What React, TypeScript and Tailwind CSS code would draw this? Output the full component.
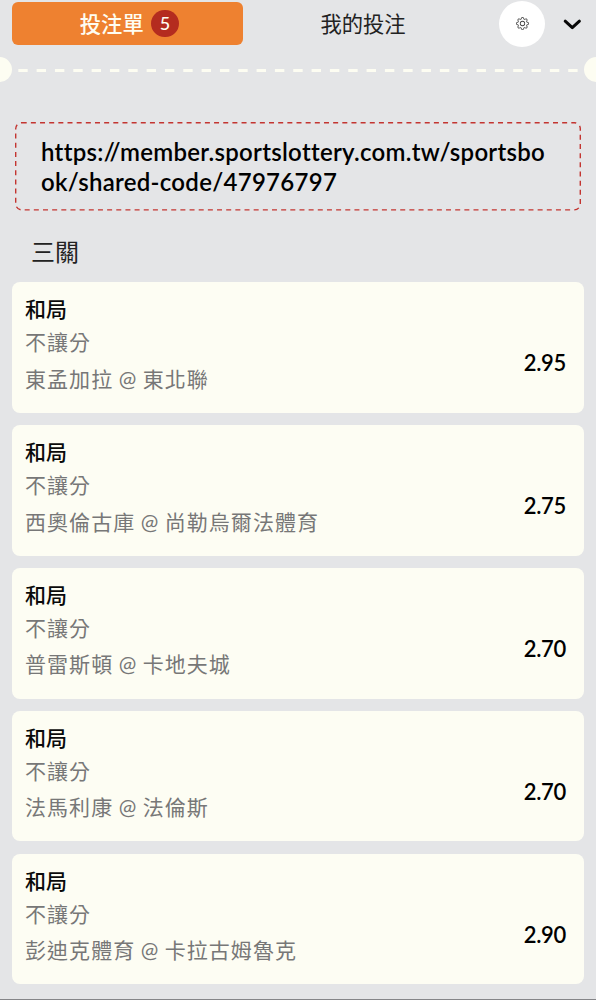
import { BsGear } from "react-icons/bs";

type Bet = {
  pick: string;
  market: string;
  match: string;
  odds: string;
};

const BETS: Bet[] = [
  { pick: "和局", market: "不讓分", match: "東孟加拉 @ 東北聯", odds: "2.95" },
  { pick: "和局", market: "不讓分", match: "西奧倫古庫 @ 尚勒烏爾法體育", odds: "2.75" },
  { pick: "和局", market: "不讓分", match: "普雷斯頓 @ 卡地夫城", odds: "2.70" },
  { pick: "和局", market: "不讓分", match: "法馬利康 @ 法倫斯", odds: "2.70" },
  { pick: "和局", market: "不讓分", match: "彭迪克體育 @ 卡拉古姆魯克", odds: "2.90" },
];

function Header() {
  return (
    <header className="flex h-[45px] items-start pl-3">
      <button
        type="button"
        className="mt-0.5 flex h-[43px] w-[231px] items-center justify-center gap-[7.5px] rounded-md bg-[#ee8130] pl-[3.5px] text-[21.3px] text-[#fefdf2]"
      >
        <span className="pb-0.5 font-medium">投注單</span>
        <span className="flex h-[27.5px] w-[27.5px] items-center justify-center rounded-full bg-[#b42c1f] font-['Lato'] text-[18px] font-medium">
          5
        </span>
      </button>
      <button
        type="button"
        className="flex h-[45px] w-[240px] items-center justify-center text-[21.3px] text-[#222]"
      >
        我的投注
      </button>
      <button
        type="button"
        aria-label="設定"
        className="ml-4 mt-[0.5px] flex h-[46px] w-[46px] shrink-0 items-center justify-center rounded-full bg-white text-[#444]"
      >
        <BsGear size={13} />
      </button>
      <button type="button" aria-label="收合" className="ml-[18px] mt-[18px]">
        <svg width="19" height="13" viewBox="0 0 19 13" fill="none">
          <path
            d="M2.2 3.2 L9.3 9.7 L16.4 3.2"
            stroke="#080808"
            strokeWidth="3"
            strokeLinecap="round"
            strokeLinejoin="round"
          />
        </svg>
      </button>
    </header>
  );
}

// 票根撕線：兩側半圓缺口加虛線
function TearLine() {
  return (
    <div className="mt-[12px] flex h-[25px] items-center justify-between overflow-hidden">
      <span className="-ml-[13px] h-[25px] w-[25px] shrink-0 rounded-full bg-[#fdfdf2]" />
      <svg width="572" height="25" viewBox="0 0 572 25" className="shrink-0">
        <line
          x1="6.3"
          y1="13.5"
          x2="566"
          y2="13.5"
          stroke="#fdfdf2"
          strokeWidth="3"
          strokeDasharray="9.4 8.93"
        />
      </svg>
      <span className="-mr-[13px] h-[25px] w-[25px] shrink-0 rounded-full bg-[#fdfdf2]" />
    </div>
  );
}

function ShareLink() {
  return (
    <div className="relative ml-[15px] mt-[40px] h-[89px] w-[566px] pl-[26px] pt-[15px]">
      <svg
        width="566"
        height="89"
        viewBox="0 0 566 89"
        fill="none"
        className="absolute left-0 top-0"
      >
        <rect
          x="0.7"
          y="0.7"
          width="564.6"
          height="87.2"
          rx="6"
          stroke="#c33531"
          strokeWidth="1.4"
          strokeDasharray="5 4.16"
        />
      </svg>
      <p className="w-[512px] break-all font-['Lato'] text-[24px] font-semibold leading-[30px] tracking-[0.28px] text-black">
        https://member.sportslottery.com.tw/sportsbook/shared-code/47976797
      </p>
    </div>
  );
}

function BetCard({ bet }: { bet: Bet }) {
  return (
    <li className="flex h-[130.6px] items-start justify-between rounded-lg bg-[#fdfdf3] pl-[13px] pr-[18px]">
      <div className="pt-[10px]">
        <h3 className="text-[21px] font-medium leading-8 text-[#0a0a0a]">{bet.pick}</h3>
        <p className="mt-px text-[21px] leading-8 tracking-[1px] text-[#777]">{bet.market}</p>
        <p className="mt-[5.5px] font-['Lato','Noto_Sans_CJK_TC',sans-serif] text-[21px] leading-8 tracking-[1.05px] text-[#777] [word-spacing:-1px]">
          {bet.match}
        </p>
      </div>
      <span className="pt-[65px] font-['Lato'] text-[22px] font-semibold leading-8 tracking-[-0.3px] text-black">
        {bet.odds}
      </span>
    </li>
  );
}

export default function App() {
  return (
    <div
      lang="zh-Hant"
      className="flex h-[1000px] w-[596px] flex-col overflow-hidden border-b border-[#858588] bg-[#e4e5e7] font-['Noto_Sans_CJK_TC',sans-serif]"
    >
      <Header />
      <TearLine />
      <ShareLink />
      <h2 className="ml-[31px] mt-[24px] h-[47.2px] text-[24px] leading-8 text-[#222]">三關</h2>
      <ul className="mx-3 flex flex-col gap-[12.3px]">
        {BETS.map((bet) => (
          <BetCard key={bet.match} bet={bet} />
        ))}
      </ul>
    </div>
  );
}
